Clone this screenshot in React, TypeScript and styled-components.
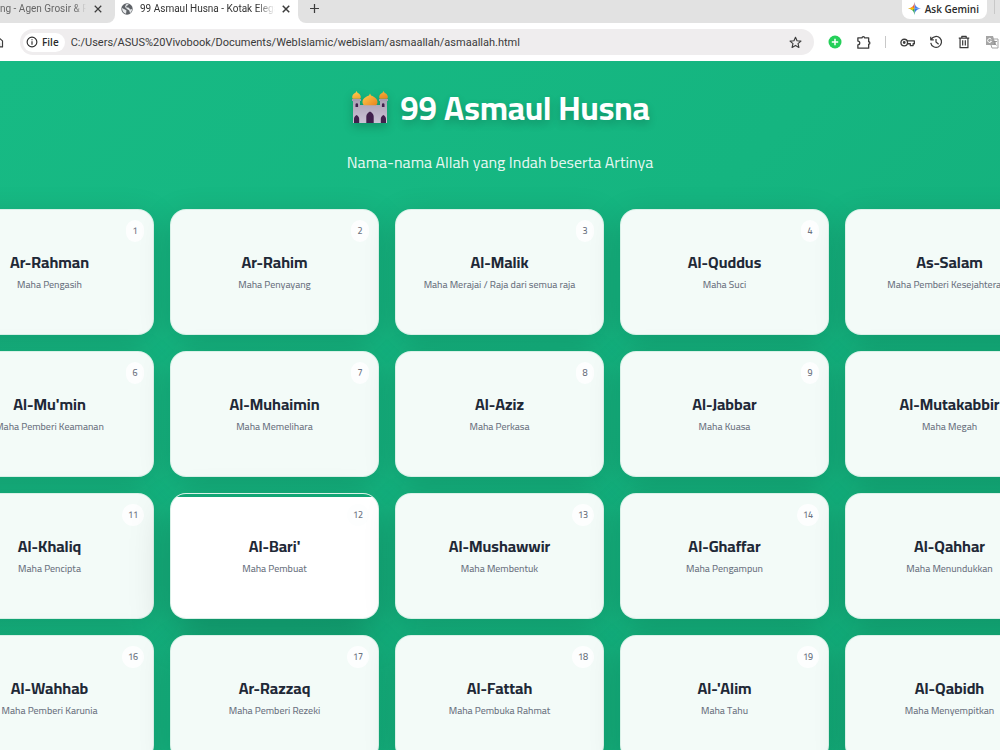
import React from "react";
import styled, { createGlobalStyle, css } from "styled-components";

const GlobalStyle = createGlobalStyle`
  * { box-sizing: border-box; }
  body {
    margin: 0;
    overflow: hidden;
    background: #12b07c;
  }
`;

const names: [string, string][] = [
  ["Ar-Rahman", "Maha Pengasih"],
  ["Ar-Rahim", "Maha Penyayang"],
  ["Al-Malik", "Maha Merajai / Raja dari semua raja"],
  ["Al-Quddus", "Maha Suci"],
  ["As-Salam", "Maha Pemberi Kesejahteraan"],
  ["Al-Mu'min", "Maha Pemberi Keamanan"],
  ["Al-Muhaimin", "Maha Memelihara"],
  ["Al-Aziz", "Maha Perkasa"],
  ["Al-Jabbar", "Maha Kuasa"],
  ["Al-Mutakabbir", "Maha Megah"],
  ["Al-Khaliq", "Maha Pencipta"],
  ["Al-Bari'", "Maha Pembuat"],
  ["Al-Mushawwir", "Maha Membentuk"],
  ["Al-Ghaffar", "Maha Pengampun"],
  ["Al-Qahhar", "Maha Menundukkan"],
  ["Al-Wahhab", "Maha Pemberi Karunia"],
  ["Ar-Razzaq", "Maha Pemberi Rezeki"],
  ["Al-Fattah", "Maha Pembuka Rahmat"],
  ["Al-'Alim", "Maha Tahu"],
  ["Al-Qabidh", "Maha Menyempitkan"],
];

const Window = styled.div`
  height: 100vh;
  display: flex;
  flex-direction: column;
  overflow: hidden;
`;

const Chrome = styled.header`
  flex: none;
  font-family: Roboto, "Open Sans", sans-serif;
  color: #2b2b2b;
  background: #fff;
`;

const TabStrip = styled.div`
  display: flex;
  height: 23px;
  background: #fff;
`;

const Tab = styled.div<{ $active?: boolean }>`
  display: flex;
  align-items: center;
  height: 23px;
  padding-bottom: 6px;
  font-size: 10px;
  line-height: 16px;
  ${(p) =>
    p.$active
      ? css`
          width: 183px;
          padding-left: 6px;
          padding-right: 8px;
          gap: 7px;
          color: #333;
        `
      : css`
          width: 115px;
          padding-right: 13px;
          gap: 8px;
          color: #666;
          background: #e2e2e2;
          border-bottom-right-radius: 8px;
        `}
`;

const TabTitle = styled.span`
  flex: 1;
  min-width: 0;
  overflow: hidden;
  white-space: nowrap;
  mask-image: linear-gradient(90deg, #000 86%, transparent);
`;

const IconButton = styled.button`
  display: flex;
  flex: none;
  align-items: center;
  justify-content: center;
  padding: 0;
  border: 0;
  background: none;
  color: #3c3c3c;
`;

const StripRest = styled.div`
  display: flex;
  flex: 1;
  align-items: flex-start;
  justify-content: space-between;
  padding-left: 11px;
  background: #e2e2e2;
  border-bottom-left-radius: 8px;
`;

const NewTab = styled(IconButton)`
  height: 17px;
`;

const Gemini = styled.button`
  display: flex;
  align-items: center;
  gap: 4px;
  height: 19px;
  padding: 0 8px 2px 6px;
  border: 0;
  border-radius: 0 0 8px 8px;
  background: #fff;
  color: #2b2b2b;
  font: 600 10px/16px "Open Sans", sans-serif;
`;

const StripEnd = styled.div`
  display: flex;
  gap: 7px;
  padding-right: 5px;
`;

const Separator = styled.span<{ $tall?: number }>`
  width: 1px;
  height: ${(p) => p.$tall}px;
  background: #c8c8c8;
`;

const Toolbar = styled.div`
  display: flex;
  align-items: center;
  height: 38px;
  overflow: hidden;
`;

const HomeButton = styled(IconButton)`
  width: 20px;
  justify-content: flex-start;
  margin-left: -8px;
  margin-right: 8px;
`;

const AddressBar = styled.div`
  display: flex;
  flex: 1;
  align-items: center;
  gap: 6px;
  min-width: 0;
  height: 26px;
  padding: 0 12px 0 3px;
  border-radius: 13px;
  background: #efedee;
`;

const Scheme = styled.button`
  display: flex;
  align-items: center;
  gap: 4px;
  height: 19px;
  padding: 0 6px 0 3px;
  border: 0;
  border-radius: 10px;
  background: #fff;
  color: #2b2b2b;
  font: 600 10px/16px "Open Sans", sans-serif;
`;

const Url = styled.input`
  flex: 1;
  min-width: 0;
  padding: 2px 0 0;
  border: 0;
  outline: 0;
  background: none;
  color: #3a3a3a;
  font: 11px/16px Roboto, "Open Sans", sans-serif;
`;

const Tools = styled.div`
  display: flex;
  flex: none;
  align-items: center;
  gap: 14px;
  width: 186px;
  padding-left: 14px;
`;

const Page = styled.main`
  flex: 1;
  min-height: 0;
  overflow: hidden;
  font-family: Cairo, Roboto, "Noto Sans", sans-serif;
  background: linear-gradient(135deg, #17ba84 0%, #15b580 50%, #13ae7a 100%);
`;

const Heading = styled.div`
  display: flex;
  flex-direction: column;
  align-items: center;
  height: 148px;
  padding-top: 25px;
  color: #fff;
`;

const Title = styled.h1`
  display: flex;
  align-items: center;
  gap: 12px;
  margin: 0;
  padding-left: 2px;
  font-size: 33px;
  line-height: 44px;
  font-weight: 700;
  text-shadow: 0 4px 8px rgba(0, 0, 0, 0.2);
  svg { filter: drop-shadow(0 4px 5px rgba(0, 0, 0, 0.2)); }
`;

const Subtitle = styled.p`
  margin: 20px 0 0;
  font-size: 16px;
  line-height: 24px;
  color: rgba(255, 255, 255, 0.9);
`;

const Grid = styled.ul`
  display: grid;
  grid-template-columns: repeat(5, minmax(0, 1fr));
  grid-auto-rows: 126px;
  gap: 16px;
  margin: 0 -54px 0 -55px;
  padding: 0;
  list-style: none;
`;

const Card = styled.li<{ $active?: boolean }>`
  position: relative;
  display: flex;
  flex-direction: column;
  align-items: center;
  padding-top: 40px;
  overflow: hidden;
  border: 1px solid rgba(214, 240, 229, 0.9);
  border-radius: 16px;
  background: #f3fbf8;
  box-shadow: 0 8px 32px rgba(0, 0, 0, 0.15);
  ${(p) =>
    p.$active &&
    css`
      background: #fff;
      box-shadow: 0 16px 40px rgba(0, 0, 0, 0.22);
      &::before {
        content: "";
        position: absolute;
        top: 0;
        left: 0;
        right: 0;
        height: 3px;
        background: #12a675;
      }
    `}
`;

const Badge = styled.span`
  position: absolute;
  top: 10px;
  right: 9px;
  min-width: 18px;
  padding: 0 6px;
  border-radius: 11px;
  background: #fdfefe;
  color: #6b7280;
  font-size: 9px;
  line-height: 22px;
  font-weight: 600;
  text-align: center;
`;

const Name = styled.h2`
  margin: 0;
  color: #1f2937;
  font-size: 16px;
  line-height: 24px;
  font-weight: 700;
`;

const Meaning = styled.p`
  margin: 0;
  color: #6b7280;
  font-size: 10px;
  line-height: 22px;
  font-weight: 500;
  white-space: nowrap;
`;

const Stroke = ({ size = 14, width = 1.6, children }: { size?: number; width?: number; children: React.ReactNode }) => (
  <svg width={size} height={size} viewBox="0 0 16 16" fill="none" stroke="currentColor" strokeWidth={width} strokeLinejoin="round" aria-hidden="true">
    {children}
  </svg>
);

const Close = ({ bold }: { bold?: boolean }) => (
  <Stroke size={8} width={bold ? 3 : 2.4}><path d="M1.5 1.5l13 13M14.5 1.5l-13 13" /></Stroke>
);

const Mosque = () => (
  <svg width="36" height="34" viewBox="0 0 36 34" aria-hidden="true">
    <defs>
      <linearGradient id="dome" x1="0" y1="0" x2="1" y2="1">
        <stop offset="0" stopColor="#ffd04f" />
        <stop offset="1" stopColor="#e9831f" />
      </linearGradient>
      <linearGradient id="wall" x1="0" y1="0" x2="0" y2="1">
        <stop offset="0" stopColor="#aaa0b4" />
        <stop offset="1" stopColor="#cbc3d6" />
      </linearGradient>
    </defs>
    <path d="M1 8h7v6h20V8h7v24H1z" fill="url(#wall)" />
    <path d="M0 8h9v2H0zM27 8h9v2h-9z" fill="#a89db4" />
    <path d="M4.500 0l1 1.800c2 1 3.300 2.300 3.300 4.200 0 1-.4 1.500-.8 1.800H1C.5 7.500.2 7 .2 6c0-1.900 1.300-3.200 3.300-4.200zM31.500 0l1 1.800c2 1 3.300 2.300 3.300 4.200 0 1-.4 1.500-.8 1.800h-7c-.5-.3-.8-.8-.8-1.800 0-1.900 1.300-3.200 3.300-4.200z" fill="url(#dome)" />
    <path d="M18 2.500l1 2c4 1.500 6.500 3.500 6.500 6.500 0 1.500-.7 2.600-1.500 3.300H12c-.8-.7-1.500-1.800-1.500-3.300 0-3 2.500-5 6.500-6.500z" fill="url(#dome)" />
    <path d="M3.500 16v-2.500a1.300 1.300 0 012.600 0V16zM29.900 16v-2.500a1.300 1.300 0 012.600 0V16zM2 32v-4c0-2 1-3 2.600-4 1.600 1 2.600 2 2.600 4v4zM28.800 32v-4c0-2 1-3 2.600-4 1.600 1 2.600 2 2.600 4v4zM14.300 32v-6.500c0-2.300 1.400-3.500 3.700-5 2.300 1.500 3.700 2.700 3.700 5V32z" fill="#40204c" />
  </svg>
);

export default function App() {
  return (
    <Window>
      <GlobalStyle />
      <Chrome>
        <TabStrip>
          <Tab>
            <TabTitle>ng - Agen Grosir &amp; Ritel</TabTitle>
            <IconButton aria-label="Close tab"><Close /></IconButton>
          </Tab>
          <Tab $active>
            <svg width="12" height="12" viewBox="0 0 12 12" aria-hidden="true">
              <circle cx="6" cy="6" r="5.700" fill="#5f6368" />
              <path d="M1 5l3 1.500 1.500 1-.5 3.300C2.500 10 1 8 1 5zM5 1.200L7.500 1c-.2 1.300-.8 1.500-1.800 1.800L5 4.200l3 .6 1 1.600 2-.4c0 2-1 3.500-2 4l-.8-2.500L6 6 4 4z" fill="#e6e8ea" />
            </svg>
            <TabTitle>99 Asmaul Husna - Kotak Elegan</TabTitle>
            <IconButton aria-label="Close tab"><Close bold /></IconButton>
          </Tab>
          <StripRest>
            <NewTab aria-label="New tab"><Stroke size={11} width={1.8}><path d="M8 1.500v13M1.500 8h13" /></Stroke></NewTab>
            <StripEnd>
              <Gemini>
                <svg width="13" height="13" viewBox="0 0 14 14" aria-hidden="true">
                  <path d="M7 0C7.700 4.500 9.500 6.300 14 7H7z" fill="#4285f4" />
                  <path d="M14 7C9.500 7.700 7.700 9.500 7 14V7z" fill="#3b78e7" />
                  <path d="M7 14C6.300 9.500 4.500 7.700 0 7h7z" fill="#34a853" />
                  <path d="M0 7C4.500 6.300 6.300 4.500 7 0v7z" fill="#ea5c40" />
                  <path d="M0 7c2.500-.4 4-1 5-2l1.500 2L5 9C4 8 2.500 7.400 0 7z" fill="#fbbc04" />
                </svg>
                Ask Gemini
              </Gemini>
              <Separator $tall={14} />
            </StripEnd>
          </StripRest>
        </TabStrip>
        <Toolbar>
          <HomeButton aria-label="Home"><Stroke size={12}><path d="M2 6.500L8 1.500l6 5v8h-4v-5H6v5H2z" /></Stroke></HomeButton>
          <AddressBar>
            <Scheme>
              <Stroke size={12} width={1.5}><circle cx="8" cy="8" r="6.500" /><path d="M8 7v4.500M8 4.200v1.600" /></Stroke>
              File
            </Scheme>
            <Url aria-label="Address" readOnly value="C:/Users/ASUS%20Vivobook/Documents/WebIslamic/webislam/asmaallah/asmaallah.html" />
            <IconButton aria-label="Bookmark"><Stroke size={13} width={1.4}><path d="M8 1.500l1.900 4.400 4.800.4-3.600 3.100 1.100 4.700L8 11.600l-4.200 2.500 1.100-4.700L1.300 6.300l4.800-.4z" /></Stroke></IconButton>
          </AddressBar>
          <Tools>
            <IconButton aria-label="Add">
              <svg width="14" height="14" viewBox="0 0 14 14" aria-hidden="true"><circle cx="7" cy="7" r="6.500" fill="#25d05a" /><path d="M7 3.800v6.400M3.800 7h6.400" stroke="#fff" strokeWidth="1.500" /></svg>
            </IconButton>
            <IconButton aria-label="Extensions"><Stroke size={15} width={1.4}><path d="M2 3h4.500a1.300 1.300 0 012.600 0h4.400v4.200a1.300 1.300 0 010 2.600V14H2v-3.500a2 2 0 000-4z" /></Stroke></IconButton>
            <Separator $tall={12} />
            <IconButton aria-label="Passwords"><Stroke size={15} width={1.4}><circle cx="4.500" cy="8" r="3.500" /><circle cx="4.500" cy="8" r=".8" /><path d="M7.500 6.300h7.800v3H14v2h-3v-2H7.800" /></Stroke></IconButton>
            <IconButton aria-label="History"><Stroke width={1.4}><path d="M2.600 5A6.200 6.200 0 112 9M2 2v3.500h3.500M8 4.500V8l3 2.500" /></Stroke></IconButton>
            <IconButton aria-label="Delete"><Stroke width={1.4}><path d="M2 3.500h12M5.500 3V1.500h5V3M3.500 3.500v11h9v-11M6.500 6v6M9.500 6v6" /></Stroke></IconButton>
            <IconButton aria-label="Translate">
              <svg width="14" height="14" viewBox="0 0 14 14" fill="none" aria-hidden="true"><path d="M1 1h7l3 9H1z" fill="#a5a5a5" /><path d="M8.500 4H13v9H7l-1-3" stroke="#a5a5a5" /><path d="M6.300 4.300a2 2 0 10.2 2H5" stroke="#fff" /><path d="M8.500 6.500H12M10.500 6.500c-.3 1.500-1 2.500-1.700 3.500M9.500 8l2 2.500" stroke="#888" strokeWidth=".8" /></svg>
            </IconButton>
          </Tools>
        </Toolbar>
      </Chrome>
      <Page>
        <Heading>
          <Title><Mosque />99 Asmaul Husna</Title>
          <Subtitle>Nama-nama Allah yang Indah beserta Artinya</Subtitle>
        </Heading>
        <Grid>
          {names.map(([name, meaning], i) => (
            <Card key={name} $active={i === 11}>
              <Badge>{i + 1}</Badge>
              <Name>{name}</Name>
              <Meaning>{meaning}</Meaning>
            </Card>
          ))}
        </Grid>
      </Page>
    </Window>
  );
}
